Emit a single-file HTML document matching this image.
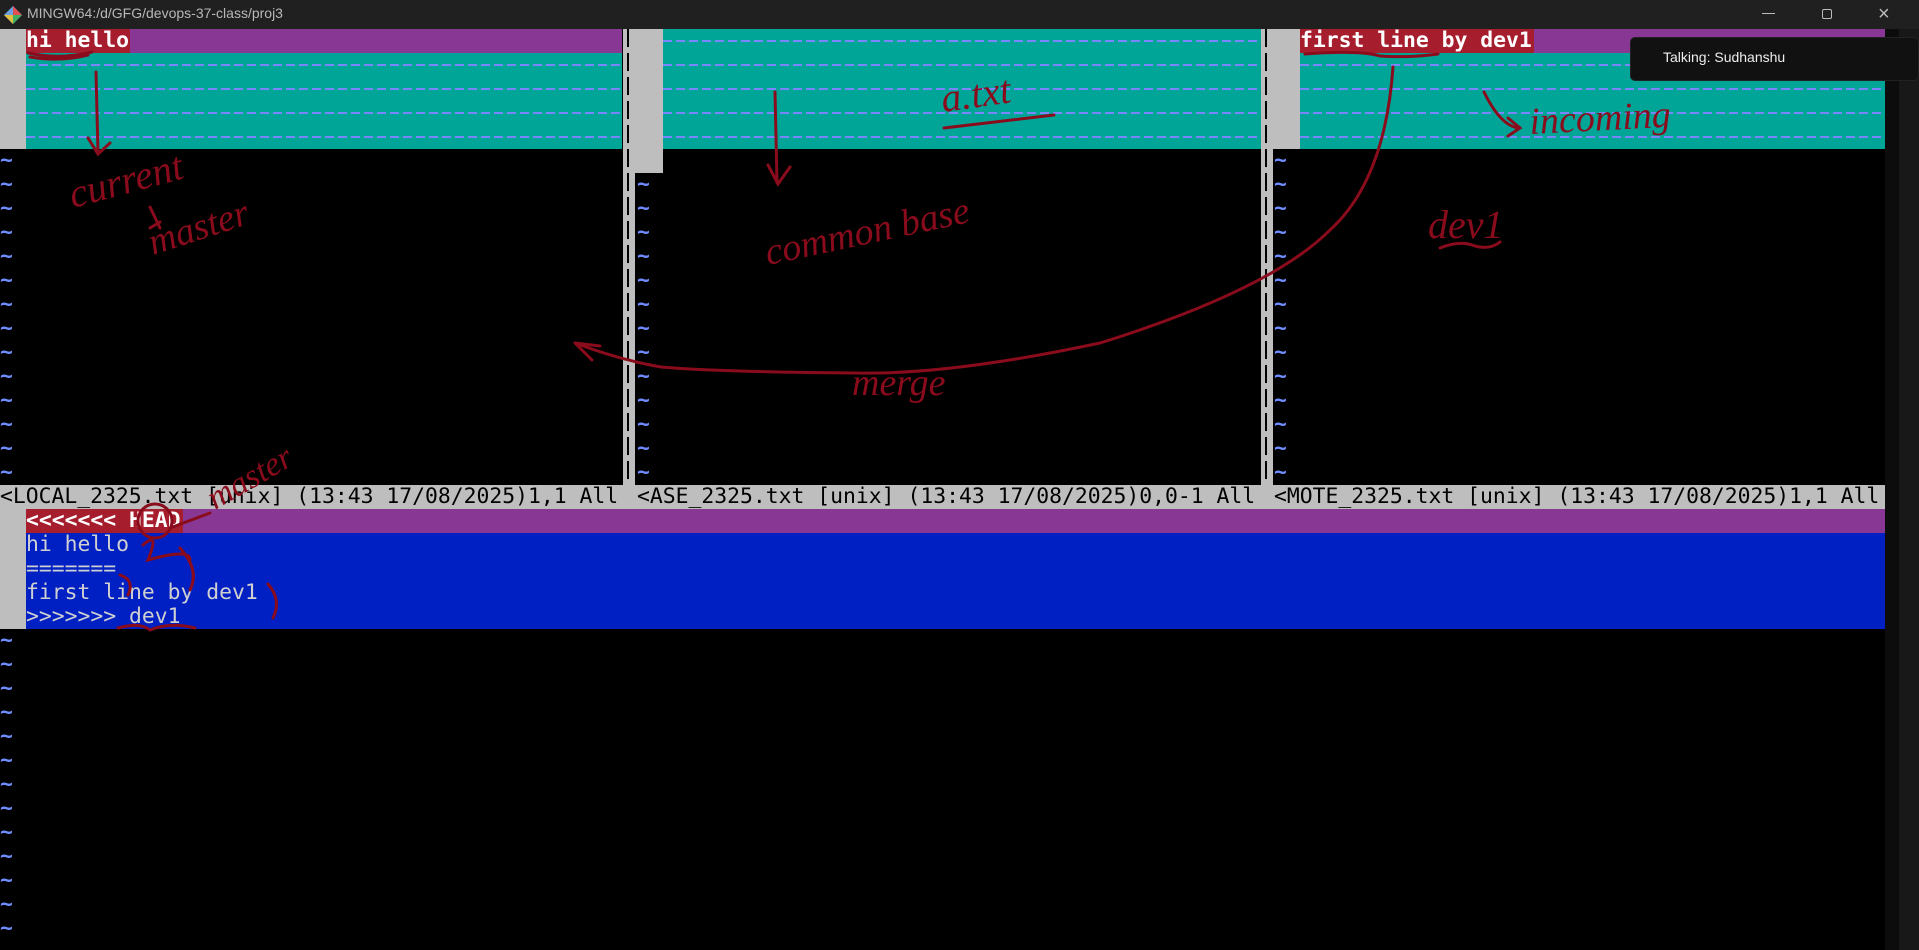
<!DOCTYPE html>
<html><head><meta charset="utf-8"><style>
*{margin:0;padding:0;box-sizing:border-box}
body{width:1919px;height:950px;background:#000;overflow:hidden;position:relative;font-family:"DejaVu Sans Mono","Liberation Mono",monospace;}
.a{position:absolute}
.t{position:absolute;font-family:"DejaVu Sans Mono","Liberation Mono",monospace;font-size:21.4px;line-height:24px;height:24px;white-space:pre}
.dash{background:repeating-linear-gradient(90deg,#7a86ff 0 9px,transparent 9px 13px);height:2px;position:absolute}
.g{background:#bebebe;position:absolute}
.tl{color:#6f8cff;font-weight:bold}
.sep{position:absolute;background:#bebebe;width:12px}
.sep:after{content:"";position:absolute;left:4px;top:0;bottom:0;width:2px;background:repeating-linear-gradient(180deg,#000 0 18px,transparent 18px 24px)}
.hw{font-family:"Liberation Serif",serif;font-style:italic;fill:#8a0c1c}
</style></head><body>
<div class="a" style="left:0;top:0;width:1919px;height:29px;background:#202020"></div>
<svg class="a" style="left:3px;top:5px" width="20" height="20" viewBox="0 0 20 20"><path d="M10 1 L19 10 L10 19 L1 10Z" fill="#6aa0e0"/><path d="M10 1 L19 10 L10 10Z" fill="#e05050"/><path d="M19 10 L10 19 L10 10Z" fill="#40b060"/><path d="M10 19 L1 10 L10 10Z" fill="#e0c040"/></svg>
<div class="a" style="left:27px;top:5px;color:#b8b8b8;font-family:'Liberation Sans',sans-serif;font-size:14px">MINGW64:/d/GFG/devops-37-class/proj3</div>
<div class="a" style="left:1762px;top:13px;width:13px;height:1px;background:#bbb"></div>
<div class="a" style="left:1822px;top:9px;width:10px;height:10px;border:1px solid #bbb;border-radius:2px"></div>
<div class="a" style="left:1878px;top:3px;color:#bbb;font-family:'Liberation Sans',sans-serif;font-size:20px">×</div>
<div class="a" style="left:1885px;top:29px;width:34px;height:921px;background:#0c0c0c"></div>
<div class="a" style="left:1899px;top:29px;width:20px;height:921px;background:#181818"></div>

<div class="a" style="left:26px;top:29px;width:596px;height:24px;background:#883894"></div>
<div class="a" style="left:26px;top:29px;width:104px;height:24px;background:#a61e2e"></div>
<div class="t" style="left:26px;top:29px;color:#fff;font-weight:bold">hi hello</div>
<div class="a" style="left:26px;top:53px;width:596px;height:96px;background:#00a598"></div>
<div class="g" style="left:0;top:29px;width:26px;height:120px"></div>
<div class="a" style="left:663px;top:29px;width:598px;height:120px;background:#00a598"></div>
<div class="g" style="left:635px;top:29px;width:28px;height:144px"></div>
<div class="a" style="left:1300px;top:29px;width:585px;height:24px;background:#883894"></div>
<div class="a" style="left:1300px;top:29px;width:234px;height:24px;background:#a61e2e"></div>
<div class="t" style="left:1300px;top:29px;color:#fff;font-weight:bold">first line by dev1</div>
<div class="a" style="left:1300px;top:53px;width:585px;height:96px;background:#00a598"></div>
<div class="g" style="left:1273px;top:29px;width:27px;height:120px"></div>
<div class="dash" style="left:663px;top:40px;width:598px"></div>
<div class="dash" style="left:26px;top:64px;width:596px"></div><div class="dash" style="left:663px;top:64px;width:598px"></div><div class="dash" style="left:1300px;top:64px;width:585px"></div>
<div class="dash" style="left:26px;top:88px;width:596px"></div><div class="dash" style="left:663px;top:88px;width:598px"></div><div class="dash" style="left:1300px;top:88px;width:585px"></div>
<div class="dash" style="left:26px;top:112px;width:596px"></div><div class="dash" style="left:663px;top:112px;width:598px"></div><div class="dash" style="left:1300px;top:112px;width:585px"></div>
<div class="dash" style="left:26px;top:136px;width:596px"></div><div class="dash" style="left:663px;top:136px;width:598px"></div><div class="dash" style="left:1300px;top:136px;width:585px"></div>
<div class="sep" style="left:623px;top:29px;height:456px"></div>
<div class="sep" style="left:1261px;top:29px;height:456px"></div>
<div class="t tl" style="left:0;top:149px">~
~
~
~
~
~
~
~
~
~
~
~
~
~</div>
<div class="t tl" style="left:637px;top:173px">~
~
~
~
~
~
~
~
~
~
~
~
~</div>
<div class="t tl" style="left:1274px;top:149px">~
~
~
~
~
~
~
~
~
~
~
~
~
~</div>
<div class="a" style="left:0;top:485px;width:1885px;height:24px;background:#bebebe"></div>
<div class="t" style="left:0;top:485px;color:#000">&lt;LOCAL_2325.txt [unix] (13:43 17/08/2025)1,1 All</div>
<div class="t" style="left:637px;top:485px;color:#000">&lt;ASE_2325.txt [unix] (13:43 17/08/2025)0,0-1 All</div>
<div class="t" style="left:1274px;top:485px;color:#000">&lt;MOTE_2325.txt [unix] (13:43 17/08/2025)1,1 All</div>
<div class="g" style="left:0;top:509px;width:26px;height:120px"></div>
<div class="a" style="left:26px;top:509px;width:1859px;height:24px;background:#883894"></div>
<div class="a" style="left:26px;top:509px;width:157px;height:24px;background:#a61e2e"></div>
<div class="t" style="left:26px;top:509px;color:#fff;font-weight:bold">&lt;&lt;&lt;&lt;&lt;&lt;&lt; HEAD</div>
<div class="a" style="left:26px;top:533px;width:1859px;height:96px;background:#0020c4"></div>
<div class="t" style="left:26px;top:533px;color:#d0d0d0;height:96px">hi hello
=======
first line by dev1
&gt;&gt;&gt;&gt;&gt;&gt;&gt; dev1</div>
<div class="t tl" style="left:0;top:629px">~
~
~
~
~
~
~
~
~
~
~
~
~</div>
<div class="a" style="left:1630px;top:37px;width:289px;height:44px;background:#111;border-radius:5px;border:1px solid #222"></div>
<div class="a" style="left:1663px;top:49px;color:#eee;font-family:'Liberation Sans',sans-serif;font-size:14px">Talking: Sudhanshu</div>
<svg class="a" style="left:0;top:0" width="1919" height="950" fill="none" stroke="#8a0c1c" stroke-width="3" stroke-linecap="round">
<path d="M28 53 Q60 60 92 52 M30 57 Q60 62 88 55"/>
<path d="M1305 54 Q1360 50 1380 56 Q1410 58 1438 54"/>
<path d="M96 72 L98 153 M88 138 L98 154 L110 143"/>
<path d="M1393 67 Q1385 180 1330 230 Q1270 290 1100 343 Q950 375 857 373 Q720 372 661 367 Q620 360 575 343 M575 343 L600 346 M575 343 L592 360"/>
<path d="M775 92 L777 183 M768 165 L778 184 L790 167"/>
<path d="M944 128 L1054 115"/>
<path d="M1484 92 Q1500 125 1518 128 M1508 118 L1520 128 L1508 136"/>
<path d="M1440 248 Q1460 240 1475 246 Q1490 250 1500 242"/>
<circle cx="155" cy="521" r="17"/>
<path d="M170 528 L210 513"/>
<path d="M143 545 Q160 530 148 560 Q190 548 190 560 M180 548 Q200 570 190 590"/>
<path d="M120 575 Q135 580 128 595"/>
<path d="M268 584 Q282 600 273 618"/>
<path d="M118 628 Q140 622 150 630 Q170 622 195 628"/>
<path d="M150 207 L160 228 M150 228 L160 222"/>
<text class="hw" x="73" y="208" font-size="40" stroke="none" transform="rotate(-15 73 208)">current</text>
<text class="hw" x="153" y="255" font-size="38" stroke="none" transform="rotate(-18 153 255)">master</text>
<text class="hw" x="943" y="112" font-size="40" stroke="none" transform="rotate(-8 943 112)">a.txt</text>
<text class="hw" x="768" y="265" font-size="38" stroke="none" transform="rotate(-12 768 265)">common base</text>
<text class="hw" x="1530" y="134" font-size="38" stroke="none" transform="rotate(-3 1530 134)">incoming</text>
<text class="hw" x="1428" y="238" font-size="40" stroke="none">dev1</text>
<text class="hw" x="852" y="395" font-size="38" stroke="none">merge</text>
<text class="hw" x="215" y="510" font-size="34" stroke="none" transform="rotate(-30 215 510)">master</text>
</svg>
</body></html>
